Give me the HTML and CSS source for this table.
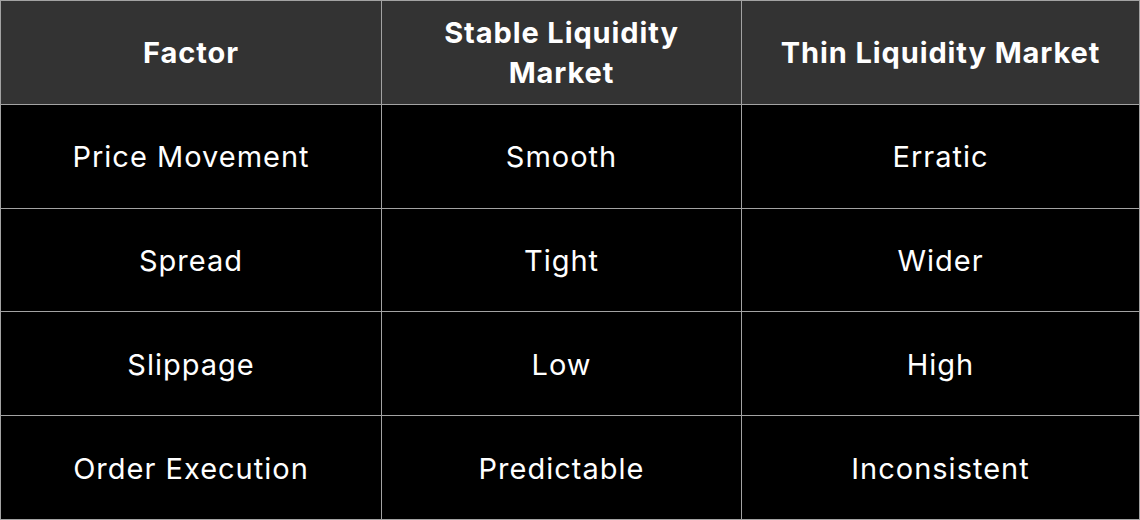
FILE: index.html
```html
<!DOCTYPE html>
<html>
<head>
<meta charset="utf-8">
<link rel="stylesheet" href="styles.css">
</head>
<body>
<div class="table">
  <div class="cell head">Factor</div>
  <div class="cell head">Stable Liquidity<br>Market</div>
  <div class="cell head">Thin Liquidity Market</div>
  <div class="cell">Price Movement</div>
  <div class="cell">Smooth</div>
  <div class="cell">Erratic</div>
  <div class="cell">Spread</div>
  <div class="cell">Tight</div>
  <div class="cell">Wider</div>
  <div class="cell">Slippage</div>
  <div class="cell">Low</div>
  <div class="cell">High</div>
  <div class="cell">Order Execution</div>
  <div class="cell">Predictable</div>
  <div class="cell">Inconsistent</div>
</div>
</body>
</html>
```
FILE: styles.css
```css
html, body {
  margin: 0;
  padding: 0;
  background: #000;
}
.table {
  width: 1140px;
  height: 520px;
  box-sizing: border-box;
  padding: 1px;
  display: grid;
  grid-template-columns: 380px 359px 397px;
  grid-template-rows: repeat(5, 1fr);
  gap: 1px;
  background: #a3a3a3;
  font-family: "Inter", sans-serif;
}
.cell {
  background: #000;
  color: #fff;
  display: flex;
  align-items: center;
  justify-content: center;
  text-align: center;
  font-size: 29px;
  line-height: 40px;
  letter-spacing: 1px;
  padding-top: 2px;
}
.head {
  background: #333;
  font-weight: 700;
  letter-spacing: 0.9px;
}
```
